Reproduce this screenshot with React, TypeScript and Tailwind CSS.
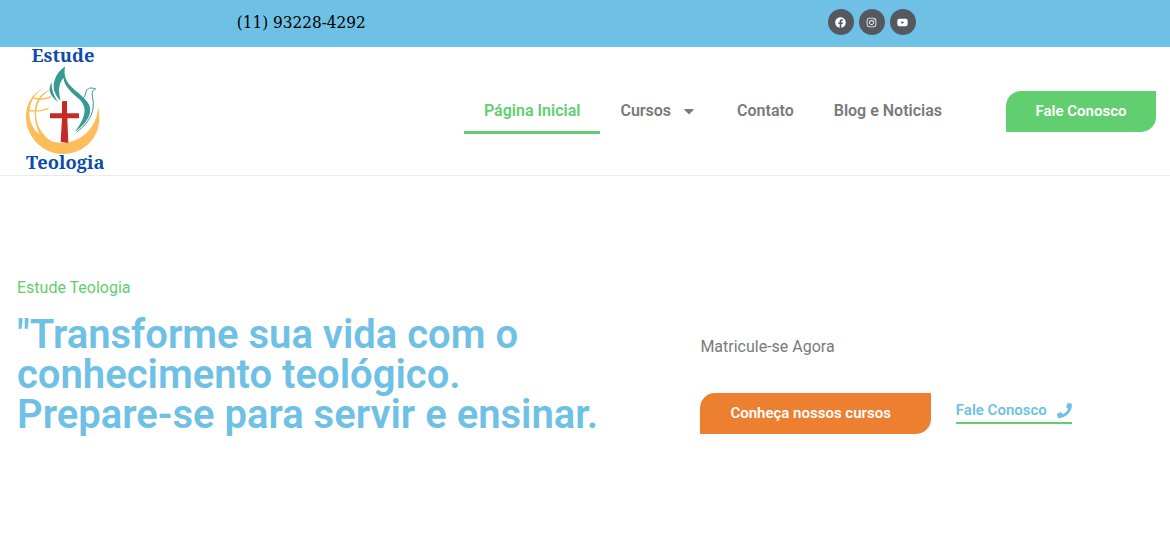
import React from "react";
import { FaCaretDown, FaFacebook, FaInstagram, FaPhone, FaYoutube } from "react-icons/fa";

const socialLinks = [
  { label: "Facebook", icon: <FaFacebook /> },
  { label: "Instagram", icon: <FaInstagram /> },
  { label: "YouTube", icon: <FaYoutube /> },
];

const navLinks = [
  { label: "Página Inicial", active: true },
  { label: "Cursos", hasMenu: true },
  { label: "Contato" },
  { label: "Blog e Noticias" },
];

const Logo = () => (
  <svg
    viewBox="0 21 330 384"
    className="h-32 w-[110px] overflow-visible"
    role="img"
    aria-label="Estude Teologia"
  >
    {/* globe */}
    <g fill="#fdbd5b">
      <path d="M104 142 C66 160 46 194 48 236 C52 296 102 342 160 342 C222 342 270 292 268 232 C268 220 267 210 264 202 C262 258 216 308 158 309 C104 308 60 272 58 222 C58 188 74 160 104 142Z" />
      <path d="M136 145 C104 152 80 180 78 222 C78 262 104 300 150 318 L128 326 C92 302 74 262 74 220 C74 178 98 150 136 145Z" />
      <path d="M54 226 C58 256 68 276 88 294 L78 226 C80 266 98 296 136 314 L104 322 C70 302 52 266 54 226Z" />
    </g>
    <g fill="none" stroke="#fdbd5b" strokeWidth="4">
      <path d="M68 172 C84 180 102 180 124 170" />
      <path d="M52 210 C72 216 92 214 116 205" />
    </g>
    {/* flame and dove */}
    <g fill="#379b94">
      <path d="M166 79 C136 98 122 135 137 163 C141 172 146 177 152 181 C143 148 148 128 160 114 C164 142 188 160 206 176 C234 200 228 232 194 276 C230 252 248 222 238 196 C228 174 198 156 180 136 C166 120 160 100 166 79Z" />
      <path d="M125 127 C112 148 120 168 144 186 C130 164 124 148 125 127Z" />
    </g>
    <path
      d="M220 174 C228 167 226 156 230 150 C236 142 247 143 257 147 C246 150 245 160 248 174 C256 212 240 248 200 276"
      fill="none"
      stroke="#379b94"
      strokeWidth="3"
    />
    {/* cross */}
    <path d="M156 184 L171 183 L171 220 L207 220 L207 235 L172 235 L175 309 L152 306 L156 235 L120 235 L120 220 L156 220Z" fill="#c42b24" />
    <g
      fill="#0b4dab"
      fontFamily="'Noto Serif', 'DejaVu Serif', serif"
      fontWeight="700"
      fontSize="55"
      textAnchor="middle"
    >
      <text x="159" y="65">Estude</text>
      <text x="166" y="386">Teologia</text>
    </g>
  </svg>
);

const App = () => {
  return (
    <div className="min-h-screen bg-white font-['Roboto',sans-serif] text-[#7a7a7a]">
      {/* Top bar */}
      <div className="bg-[#6ec1e4] pr-[13px] pl-4">
        <div className="grid h-[47px] grid-cols-2">
          <a
            href="tel:+5511932284292"
            className="mt-2 justify-self-center font-['Roboto_Slab','DejaVu_Serif_Condensed','DejaVu_Serif',serif] text-[17px] leading-7 font-light text-black"
          >
            (11) 93228-4292
          </a>
          <div className="mt-[9px] flex items-start justify-center gap-[5px]">
            {socialLinks.map((item) => (
              <a
                key={item.label}
                href="#"
                aria-label={item.label}
                className="flex size-[26px] items-center justify-center rounded-full bg-[#54595f] text-[11px] text-white"
              >
                {item.icon}
              </a>
            ))}
          </div>
        </div>
      </div>

      {/* Header */}
      <header className="flex items-center justify-between border-b border-[#eaeaea] pr-[14px] pl-[10px]">
        <a href="#">
          <Logo />
        </a>
        <div className="flex items-center gap-11">
          <nav className="flex">
            {navLinks.map((item) => (
              <a
                key={item.label}
                href="#"
                className={
                  item.active
                    ? "flex items-center border-b-[3px] border-[#61ce70] px-5 pt-[10px] pb-2 text-base font-semibold text-[#61ce70]"
                    : "flex items-center border-b-[3px] border-transparent px-5 pt-[10px] pb-2 text-base font-semibold"
                }
              >
                {item.label}
                {item.hasMenu && <FaCaretDown className="ml-[10px]" />}
              </a>
            ))}
          </nav>
          <button
            type="button"
            className="h-[41px] min-w-[150px] rounded-tl-[15px] rounded-br-[15px] bg-[#61ce70] px-[29px] text-[15px] font-semibold text-white"
          >
            Fale Conosco
          </button>
        </div>
      </header>

      {/* Hero */}
      <section className="grid grid-cols-[3fr_2fr] items-end pt-[100px] pr-[14px] pb-[98px] pl-[17px]">
        <div>
          <p className="text-base text-[#61ce70]">Estude Teologia</p>
          <h1 className="mt-[15px] text-[40px] leading-[40px] font-semibold text-[#6ec1e4]">
            "Transforme sua vida com o
            <br />
            conhecimento teológico.
            <br />
            Prepare-se para servir e ensinar.
          </h1>
        </div>
        <div className="pb-px">
          <p className="text-base">Matricule-se Agora</p>
          <div className="mt-[34px] flex items-start gap-[25px]">
            <button
              type="button"
              className="h-[41px] rounded-tl-[15px] rounded-br-[15px] bg-[#ed7f30] pr-10 pl-[30px] text-[15px] font-semibold text-white"
            >
              Conheça nossos cursos
            </button>
            <a
              href="#"
              className="mt-[7px] flex items-center gap-[10px] border-b-2 border-[#61ce70] pb-[2px] text-[15px] leading-5 font-semibold text-[#6ec1e4]"
            >
              Fale Conosco
              <FaPhone />
            </a>
          </div>
        </div>
      </section>
    </div>
  );
};

export default App;
